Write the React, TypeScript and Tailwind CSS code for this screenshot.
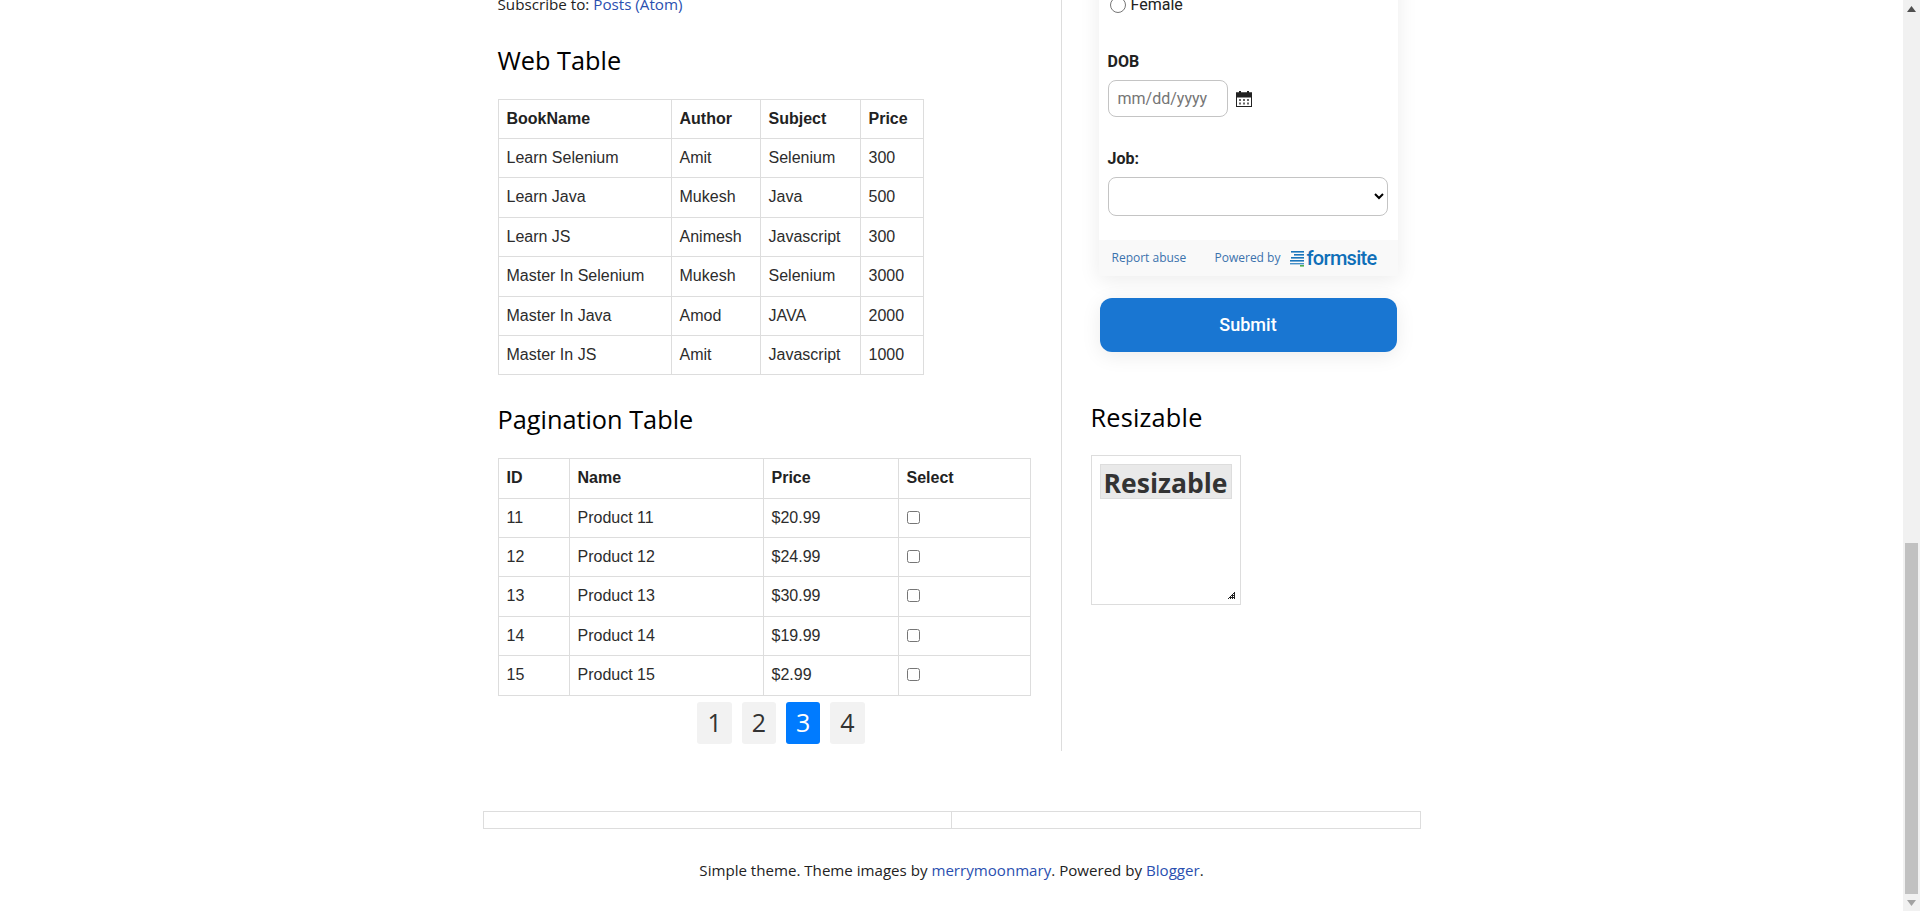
import React from "react";

const body = { fontFamily: '"Open Sans", "Noto Sans", sans-serif' };
const arial = { fontFamily: '"Liberation Sans", Arial, sans-serif' };
const roboto = { fontFamily: 'Roboto, "Liberation Sans", sans-serif' };

const books = [
  ["Learn Selenium", "Amit", "Selenium", "300"],
  ["Learn Java", "Mukesh", "Java", "500"],
  ["Learn JS", "Animesh", "Javascript", "300"],
  ["Master In Selenium", "Mukesh", "Selenium", "3000"],
  ["Master In Java", "Amod", "JAVA", "2000"],
  ["Master In JS", "Amit", "Javascript", "1000"],
];

const products = [
  ["11", "Product 11", "$20.99"],
  ["12", "Product 12", "$24.99"],
  ["13", "Product 13", "$30.99"],
  ["14", "Product 14", "$19.99"],
  ["15", "Product 15", "$2.99"],
];

const cell = "border border-[#dddddd] p-2 text-left leading-[22.4px] text-[16px] text-[#2c2c2c] font-normal";
const head = "border border-[#dddddd] p-2 text-left leading-[22.4px] text-[16px] text-[#222222] font-bold";

const gripDots: [number, number][] = [];
for (let y = 0; y < 7; y++) {
  for (let x = 0; x < 7; x++) {
    if (x + y >= 6 && ((x + y) % 2 === 0 || x % 2 === 0)) gripDots.push([x, y]);
  }
}

function Calendar() {
  return (
    <svg width="16" height="16" viewBox="0 0 16 16" className="ml-2 shrink-0">
      <rect x="3" y="0" width="2" height="3" fill="#222" />
      <rect x="11" y="0" width="2" height="3" fill="#222" />
      <rect x="0" y="1.5" width="16" height="5" fill="#222" />
      <rect x="0.5" y="2" width="15" height="13.5" fill="none" stroke="#222" />
      <g fill="#666">
        <rect x="3" y="8" width="2" height="2" />
        <rect x="7" y="8" width="2" height="2" />
        <rect x="11" y="8" width="2" height="2" />
        <rect x="3" y="11.5" width="2" height="2" />
        <rect x="7" y="11.5" width="2" height="2" />
        <rect x="11" y="11.5" width="2" height="2" />
      </g>
    </svg>
  );
}

function FormsiteMark() {
  return (
    <svg width="15" height="17" viewBox="0 0 15 17" className="shrink-0">
      <g fill="#1a75bb">
        <rect x="1" y="1" width="13" height="1.6" />
        <rect x="4" y="4" width="10" height="1.6" />
        <rect x="1" y="7" width="13" height="1.6" />
        <rect x="0" y="10" width="14" height="1.6" />
        <rect x="0" y="13" width="14" height="1.4" opacity="0.8" />
      </g>
      <rect x="10" y="15" width="4" height="1.6" fill="#4caf50" />
    </svg>
  );
}

function Scrollbar() {
  return (
    <div className="w-[17px] shrink-0 h-full bg-[#f1f1f1] flex flex-col items-center">
      <div className="h-[17px] w-full flex items-center justify-center">
        <svg width="9" height="6" viewBox="0 0 9 6"><path d="M4.5 0 L9 6 L0 6 Z" fill="#505050" /></svg>
      </div>
      <div className="flex-1" />
      <div className="h-[351px] w-[13px] bg-[#c1c1c1]" />
      <div className="h-[17px] w-full flex items-center justify-center">
        <svg width="9" height="6" viewBox="0 0 9 6"><path d="M0 0 L9 0 L4.5 6 Z" fill="#a3a3a3" /></svg>
      </div>
    </div>
  );
}

export default function App() {
  return (
    <div className="flex h-[911px] w-full overflow-hidden bg-white" style={body}>
      <div className="flex-1 min-w-0 overflow-hidden flex flex-col items-center">
        <div className="w-[938px]">
          <div className="flex pl-[15px] h-[751px]">
            {/* left column */}
            <div className="w-[564px] shrink-0 border-r border-[#dddddd] h-full">
              <div className="-mt-[7px] text-[15.2px] leading-[22px] text-[#222222]">
                Subscribe to: <a className="text-[#2a4fb0]">Posts (Atom)</a>
              </div>
              <h2 className="mt-[30px] mb-[23.55px] text-[25.3px] leading-[30px] text-black font-normal">Web Table</h2>
              <div style={arial}>
                <table className="border-collapse table-fixed w-[425px]">
                  <thead>
                    <tr>
                      <th className={`${head} w-[173px]`}>BookName</th>
                      <th className={`${head} w-[89px]`}>Author</th>
                      <th className={`${head} w-[100px]`}>Subject</th>
                      <th className={`${head} w-[63px]`}>Price</th>
                    </tr>
                  </thead>
                  <tbody>
                    {books.map((r) => (
                      <tr key={r[0]}>
                        {r.map((c, i) => (
                          <td key={i} className={cell}>{c}</td>
                        ))}
                      </tr>
                    ))}
                  </tbody>
                </table>
              </div>
              <h2 className="mt-[29px] mb-[23.85px] text-[25.3px] leading-[30px] text-black font-normal">Pagination Table</h2>
              <div style={arial}>
                <table className="border-collapse w-[532px] table-fixed">
                  <thead>
                    <tr>
                      <th className={`${head} w-[71px]`}>ID</th>
                      <th className={`${head} w-[194px]`}>Name</th>
                      <th className={`${head} w-[135px]`}>Price</th>
                      <th className={`${head} w-[132px]`}>Select</th>
                    </tr>
                  </thead>
                  <tbody>
                    {products.map((r) => (
                      <tr key={r[0]}>
                        {r.map((c, i) => (
                          <td key={i} className={cell}>{c}</td>
                        ))}
                        <td className={`${cell} align-top`}>
                          <input type="checkbox" className="block mt-[4px]" />
                        </td>
                      </tr>
                    ))}
                  </tbody>
                </table>
              </div>
              <div className="mt-[6px] w-full pl-[4px] flex justify-center gap-[10px]">
                {["1", "2", "3", "4"].map((p) => (
                  <a
                    key={p}
                    className={
                      p === "3"
                        ? "h-[42px] px-[10px] flex items-center rounded-[3px] text-[25px] bg-[#007bff] text-white"
                        : "h-[42px] px-[10px] flex items-center rounded-[3px] text-[25px] bg-[#f2f2f2] text-[#333333]"
                    }
                  >
                    {p}
                  </a>
                ))}
              </div>
            </div>

            {/* right column */}
            <div className="flex-1 min-w-0 -mt-[40px]">
              <div className="ml-[37px] w-[299px] bg-white shadow-[0_4px_20px_rgba(0,0,0,0.08)]" style={roboto}>
                <div className="px-[9px] pt-[34px] pb-[24px]">
                  <label className="flex items-center h-[22px] text-[16px] text-[#222222]">
                    <input type="radio" name="g" className="w-[16px] h-[16px] m-0 mr-[5px] ml-[2px]" />
                    Female
                  </label>
                  <div className="mt-[36px] h-[20px] leading-[20px] text-[16px] font-bold text-[#222222]">DOB</div>
                  <div className="mt-[8px] flex items-center">
                    <input
                      readOnly
                      placeholder="mm/dd/yyyy"
                      className="w-[120px] h-[37px] rounded-[8px] border border-[#c4c4c4] px-[9px] text-[16px] outline-none placeholder:text-[#757575]"
                    />
                    <Calendar />
                  </div>
                  <div className="mt-[32px] h-[20px] leading-[20px] text-[16px] font-bold text-[#222222]">Job:</div>
                  <select className="mt-[8px] block w-[280.5px] h-[39px] rounded-[8px] border border-[#c4c4c4] bg-white text-[16px]" />
                </div>
                <div className="h-[36px] bg-[#f9f9f9] flex items-center pl-[13px] text-[12px] text-[#3b72ad]" style={body}>
                  <span className="w-[103px]">Report abuse</span>
                  <span className="w-[75px]">Powered by</span>
                  <FormsiteMark />
                  <span className="ml-[2px] text-[20px] tracking-[-0.7px] font-medium text-[#0f6fb8] leading-none" style={roboto}>formsite</span>
                </div>
              </div>
              <div
                className="ml-[38px] mt-[22px] w-[297px] h-[54px] pb-[2px] rounded-[12px] bg-[#1976d2] text-white text-[18px] font-medium flex items-center justify-center shadow-[0_4px_20px_rgba(0,0,0,0.08)]"
                style={roboto}
              >
                Submit
              </div>
              <div className="ml-[29px]">
                <h2 className="mt-[50px] mb-[23px] text-[25.3px] tracking-[0.2px] leading-[30px] text-black font-normal">Resizable</h2>
                <div className="relative w-[150px] h-[150px] border border-[#dddddd] pt-[8px] pl-[8px] bg-white">
                  <div className="w-[132px] h-[35px] pt-[5px] bg-[#e9e9e9] border border-[#dddddd] flex items-center justify-center text-[26.5px] font-bold text-[#333333]">
                    Resizable
                  </div>
                  <svg width="7" height="7" viewBox="0 0 7 7" shapeRendering="crispEdges" className="absolute right-[5px] bottom-[5px]">
                    {gripDots.map(([x, y]) => (
                      <rect key={`${x}-${y}`} x={x} y={y} width="1" height="1" fill="#222222" />
                    ))}
                  </svg>
                </div>
              </div>
            </div>
          </div>

          <table className="mt-[60px] w-[938px] border-collapse">
            <tbody>
              <tr>
                <td className="w-1/2 h-[17px] border border-[#dddddd]" />
                <td className="w-1/2 h-[17px] border border-[#eeeeee] border-r-[#dddddd] border-y-[#dddddd]" />
              </tr>
            </tbody>
          </table>

          <div className="mt-[30px] text-center text-[15.1px] leading-[22px] text-[#222222]">
            Simple theme. Theme images by <a className="text-[#2a4fb0]">merrymoonmary</a>. Powered by <a className="text-[#2a4fb0]">Blogger</a>.
          </div>
        </div>
      </div>
      <Scrollbar />
    </div>
  );
}
